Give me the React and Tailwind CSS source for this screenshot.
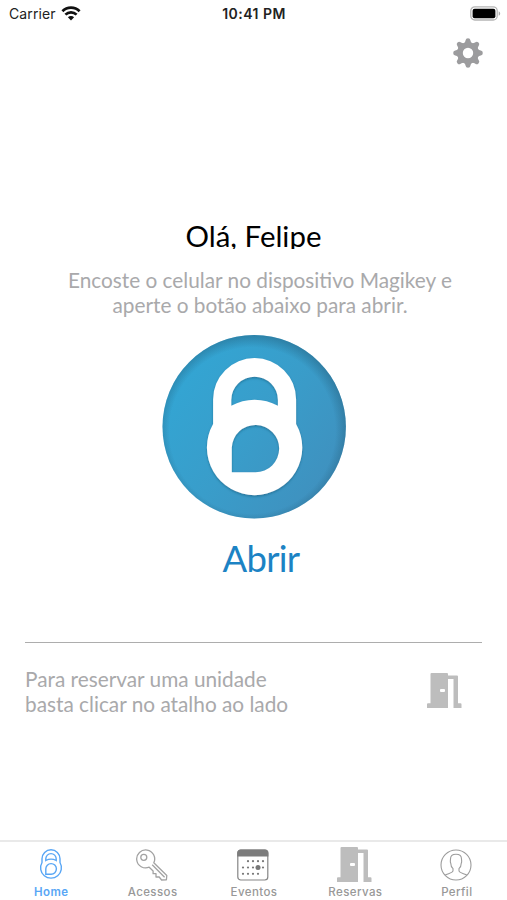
import React from 'react';

const WifiIcon = () => (
    <svg width="20" height="15" viewBox="0 0 20 15" fill="none" stroke="#111" strokeWidth="2.7">
        <path d="M1.4 5.2a12.2 12.2 0 0 1 17.2 0" />
        <path d="M4.4 8.6a8 8 0 0 1 11.2 0" />
        <path d="M10 14.4 6.9 11.2a4.4 4.4 0 0 1 6.2 0Z" fill="#111" stroke="none" />
    </svg>
);

const BatteryIcon = () => (
    <svg width="31" height="15" viewBox="0 0 31 15">
        <rect x="0.8" y="0.8" width="26.4" height="13.2" rx="4" fill="#fff" stroke="#b5b5b5" strokeWidth="1.3" />
        <rect x="2.6" y="2.7" width="22.8" height="9.5" rx="2" fill="#000" />
        <path d="M28.7 5.2c2 .9 2 3.7 0 4.6Z" fill="#aaa" />
    </svg>
);

const GearIcon = () => (
    <svg width="30" height="30" viewBox="-15 -15 30 30" fill="#9c9c9e">
        <path fillRule="evenodd" d="M0-10.8a10.8 10.8 0 1 0 0 21.6a10.8 10.8 0 1 0 0-21.6ZM0-5.2a5.2 5.2 0 1 1 0 10.4a5.2 5.2 0 1 1 0-10.4Z" />
        {[0, 45, 90, 135, 180, 225, 270, 315].map((angle) => (
            <path key={angle} transform={`rotate(${angle})`} d="M-4.2-9.6Q-2.6-11-2.4-12.8Q-2.2-14.8 0-14.8Q2.2-14.8 2.4-12.8Q2.6-11 4.2-9.6Z" />
        ))}
    </svg>
);

const LockLogo = () => (
    <svg width="186" height="186" viewBox="0 0 186 186">
        <defs>
            <linearGradient id="face" x1="0.1" y1="0.2" x2="0.9" y2="0.8">
                <stop offset="0" stopColor="#33a5d3" />
                <stop offset="0.5" stopColor="#399dca" />
                <stop offset="1" stopColor="#3f91bf" />
            </linearGradient>
            <radialGradient id="rim" cx="0.49" cy="0.52" r="0.52">
                <stop offset="0.87" stopColor="#245f7d" stopOpacity="0" />
                <stop offset="1" stopColor="#245f7d" stopOpacity="0.48" />
            </radialGradient>
            <filter id="lockShadow" x="-20%" y="-20%" width="140%" height="140%">
                <feDropShadow dx="0" dy="1.3" stdDeviation="1.2" floodColor="#18506c" floodOpacity="0.5" />
            </filter>
        </defs>
        <circle cx="93.2" cy="92.8" r="91.7" fill="url(#face)" />
        <circle cx="93.2" cy="92.8" r="91.7" fill="url(#rim)" />
        <path
            transform="translate(0.8 0)"
            filter="url(#lockShadow)"
            fill="#fff"
            fillRule="evenodd"
            d="M51.3 90V65.5a41.5 41.5 0 0 1 83 0V90a47.7 47.7 0 1 1-83 0ZM69.5 71.7V66a23.3 23.3 0 0 1 46.6 0v5.7a48 48 0 0 0-46.6 0ZM70 138.3V113.6A23.7 23.7 0 1 1 93.8 138.3Z"
        />
    </svg>
);

const DoorIcon = () => (
    <svg width="35" height="35" viewBox="0 0 35 35" fill="#bdbdbd">
        <path fillRule="evenodd" d="M3.5 1Q3.5 0 4.5 0H20Q21 0 21 1V2.5H30Q31 2.5 31 3.5V30.2H33.5Q34.5 30.2 34.5 31.2V35H26.5V6H21V35H0V31.2Q0 30.2 1 30.2H3.5ZM14 16.1H17Q18 16.1 18 17.1V18.1Q18 19.1 17 19.1H14Q13 19.1 13 18.1V17.1Q13 16.1 14 16.1Z" />
    </svg>
);

const HomeIcon = () => (
    <svg width="24" height="32" viewBox="0 0 24 32" fill="none" stroke="#58a6f5" strokeWidth="1.4">
        <path d="M3 13.5V9.8a9 9 0 0 1 18 0v3.7a10.4 10.4 0 1 1-18 0Z" />
        <path d="M6.8 11.5V9.8a5.2 5.2 0 0 1 10.4 0v1.7Q12 8.7 6.8 11.5Z" />
        <path d="M6.8 25.2V20a5.3 5.3 0 1 1 5.3 5.2Z" />
    </svg>
);

const KeyIcon = () => (
    <svg width="32" height="32" viewBox="0 0 32 32" fill="none" stroke="#a2a2a2" strokeWidth="1.3" strokeLinejoin="round">
        <path d="M17.8 13.8A9 9 0 1 0 13.2 18.2L17.1 22V24.7H20V28H23.2L25.6 31L30.4 30.8L30.8 26.5Z" />
        <circle cx="7.8" cy="8.3" r="3" />
        <path d="M16.2 15.8 28.6 28.2" />
    </svg>
);

const CalendarIcon = () => (
    <svg width="32" height="32" viewBox="0 0 32 32">
        <rect x="0.8" y="1" width="30" height="30" rx="3" fill="#fff" stroke="#858585" strokeWidth="1.2" />
        <path d="M.2 7.5V4Q.2 .4 4 .4H27.8Q31.4.4 31.4 4V7.5Z" fill="#7c7c7c" />
        <g fill="#777">
            {[11, 16, 21, 26].map((x) => <circle key={x} cx={x} cy="12.2" r="1.1" />)}
            {[6, 11, 16, 26].map((x) => <circle key={x} cx={x} cy="18.5" r="1.1" />)}
            {[6, 11, 16, 21].map((x) => <circle key={x} cx={x} cy="24.8" r="1.1" />)}
            <circle cx="21" cy="18.5" r="2.5" />
        </g>
    </svg>
);

const ProfileIcon = () => (
    <svg width="32" height="32" viewBox="0 0 32 32" fill="none" stroke="#9c9c9c" strokeWidth="1.1">
        <circle cx="16" cy="16" r="15" />
        <path d="M5 26.2C7.5 24.5 12.8 24.3 13 21.8V19.6C11.2 18 10.8 16 10.8 14.4C9.8 12.8 10.5 11.8 10.5 10C10.5 6.7 12.5 5.3 16 5.3S21.5 6.7 21.5 10C21.5 11.8 22.2 12.8 21.2 14.4C21.2 16 20.8 18 19 19.6V21.8C19.2 24.3 24.5 24.5 27 26.2" />
    </svg>
);

const tabs = [
    { label: 'Home', icon: <HomeIcon />, active: true },
    { label: 'Acessos', icon: <KeyIcon /> },
    { label: 'Eventos', icon: <CalendarIcon /> },
    { label: 'Reservas', icon: <DoorIcon /> },
    { label: 'Perfil', icon: <ProfileIcon /> },
];

const App = () => {
    return (
        <div className="flex flex-col w-[507px] h-[900px] bg-white overflow-hidden font-[Lato,sans-serif]">
            <header className="grid grid-cols-3 items-center h-[26px] pl-[9px] pr-1.5 font-[Inter,sans-serif] text-[14px] text-[#222]">
                <div className="flex items-center gap-[5px]">
                    <span className="tracking-[0.1px]">Carrier</span>
                    <WifiIcon />
                </div>
                <div className="pr-[2px] text-center font-semibold text-[14px] tracking-[0.45px] whitespace-nowrap">10:41 PM</div>
                <div className="flex justify-end">
                    <BatteryIcon />
                </div>
            </header>

            <div className="flex justify-end pt-[12px] pr-[24px]">
                <button aria-label="Ajustes">
                    <GearIcon />
                </button>
            </div>

            <main className="flex flex-col items-center mt-[150px]">
                <h1 className="h-[31px] overflow-hidden text-[29.4px] leading-[36px] text-black">Olá, Felipe</h1>
                <p className="mt-[18px] pl-[13px] text-center text-[20.8px] leading-[25px] text-[#a9a9ab]">
                    Encoste o celular no dispositivo Magikey e<br />
                    aperte o botão abaixo para abrir.
                </p>
                <button className="mt-[17px] flex flex-col items-center">
                    <LockLogo />
                    <span className="mt-[16px] pl-[15px] text-[36.5px] leading-[44px] tracking-[-0.7px] text-[#1c83c4]">Abrir</span>
                </button>
            </main>

            <section className="mx-[25px] mt-[62px] flex justify-between border-t border-[#adadad] pt-[23px]">
                <p className="text-[20.8px] leading-[25px] text-[#a9a9ab]">
                    Para reservar uma unidade<br />
                    basta clicar no atalho ao lado
                </p>
                <button aria-label="Reservar" className="mr-[20px] mt-[7px] self-start">
                    <DoorIcon />
                </button>
            </section>

            <nav className="mt-auto grid grid-cols-5 h-[60px] border-t-2 border-[#e9e9e9] font-[Inter,sans-serif]">
                {tabs.map((tab) => (
                    <button key={tab.label} className="flex flex-col items-center pt-[5px]">
                        <span className="flex h-[35px] items-center">{tab.icon}</span>
                        <span className={`mt-[2px] pl-px text-[11.5px] leading-[16px] tracking-[0.4px] ${tab.active ? 'font-semibold text-[#58a6f5]' : 'font-medium text-[#989898]'}`}>
                            {tab.label}
                        </span>
                    </button>
                ))}
            </nav>
        </div>
    );
};

export default App;
